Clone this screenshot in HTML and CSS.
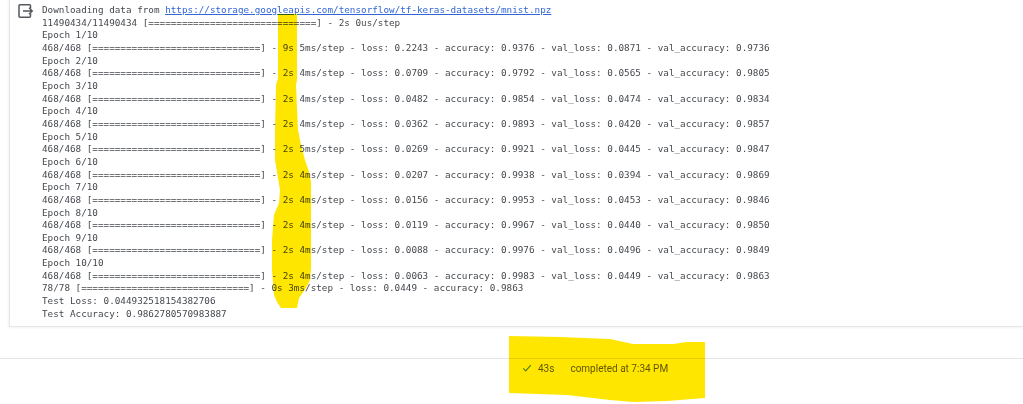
FILE: index.html
```html
<!DOCTYPE html>
<html lang="en">
<head>
<meta charset="utf-8">
<title>Output</title>
<link rel="stylesheet" href="styles.css">
</head>
<body>
<main class="page">
  <section class="cell">
    <svg class="out-icon" viewBox="0 0 16 16" width="16" height="16" aria-hidden="true">
      <path d="M12.5 5.5V2.8a1 1 0 0 0-1-1H2a1 1 0 0 0-1 1v10.4a1 1 0 0 0 1 1h9.5a1 1 0 0 0 1-1v-2.7" fill="none" stroke="#54585c" stroke-width="1.5"/>
      <path d="M5 8h9.5M11 4.8 14.2 8 11 11.2" fill="none" stroke="#54585c" stroke-width="1.5"/>
    </svg>
    <pre class="log">Downloading data from <a class="link" href="#">https://storage.googleapis.com/tensorflow/tf-keras-datasets/mnist.npz</a>
11490434/11490434 [==============================] - 2s 0us/step
Epoch 1/10
468/468 [==============================] - 9s 5ms/step - loss: 0.2243 - accuracy: 0.9376 - val_loss: 0.0871 - val_accuracy: 0.9736
Epoch 2/10
468/468 [==============================] - 2s 4ms/step - loss: 0.0709 - accuracy: 0.9792 - val_loss: 0.0565 - val_accuracy: 0.9805
Epoch 3/10
468/468 [==============================] - 2s 4ms/step - loss: 0.0482 - accuracy: 0.9854 - val_loss: 0.0474 - val_accuracy: 0.9834
Epoch 4/10
468/468 [==============================] - 2s 4ms/step - loss: 0.0362 - accuracy: 0.9893 - val_loss: 0.0420 - val_accuracy: 0.9857
Epoch 5/10
468/468 [==============================] - 2s 5ms/step - loss: 0.0269 - accuracy: 0.9921 - val_loss: 0.0445 - val_accuracy: 0.9847
Epoch 6/10
468/468 [==============================] - 2s 4ms/step - loss: 0.0207 - accuracy: 0.9938 - val_loss: 0.0394 - val_accuracy: 0.9869
Epoch 7/10
468/468 [==============================] - 2s 4ms/step - loss: 0.0156 - accuracy: 0.9953 - val_loss: 0.0453 - val_accuracy: 0.9846
Epoch 8/10
468/468 [==============================] - 2s 4ms/step - loss: 0.0119 - accuracy: 0.9967 - val_loss: 0.0440 - val_accuracy: 0.9850
Epoch 9/10
468/468 [==============================] - 2s 4ms/step - loss: 0.0088 - accuracy: 0.9976 - val_loss: 0.0496 - val_accuracy: 0.9849
Epoch 10/10
468/468 [==============================] - 2s 4ms/step - loss: 0.0063 - accuracy: 0.9983 - val_loss: 0.0449 - val_accuracy: 0.9863
78/78 [==============================] - 0s 3ms/step - loss: 0.0449 - accuracy: 0.9863
Test Loss: 0.044932518154382706
Test Accuracy: 0.9862780570983887</pre>
  </section>
  <footer class="status">
    <svg class="check" viewBox="0 0 12 12" width="10" height="10" aria-hidden="true">
      <path d="M1.5 6.5 4.5 9.5 10.5 2.5" fill="none" stroke="#4f8a10" stroke-width="1.3"/>
    </svg>
    <span class="duration">43s</span>
    <span class="completed">completed at 7:34 PM</span>
  </footer>
  <svg class="highlight" viewBox="0 0 1023 404" width="1023" height="404" aria-hidden="true">
    <path d="M278 14H297V80L296 85L298 130L301 145L305 160L309 172L311 182V268L310 280L306 288L299 298L297 308H281L277 302L274 295L272 270V240L274 215L279 203L280 190L278 178L275 160V130L276 85L278 78Z" fill="#ffe600"/>
    <path d="M509 336L560 337L610 339L633 344L673 344L687 342L705 342V398L667 401L633 402L610 400L567 395L509 393Z" fill="#ffe600"/>
  </svg>
</main>
</body>
</html>
```
FILE: styles.css
```css
html, body {
  margin: 0;
  padding: 0;
  background: #fff;
}
.page {
  position: relative;
  width: 1023px;
  height: 404px;
  overflow: hidden;
  filter: blur(0.3px);
}
.cell {
  display: flex;
  align-items: flex-start;
  gap: 8px;
  height: 327px;
  box-sizing: border-box;
  margin-left: 9px;
  padding: 3px 0 0 8px;
  border-left: 1px solid #e6e6e6;
  border-bottom: 1px solid #e6e6e6;
  box-shadow: -1px 1px 2px rgba(0, 0, 0, 0.05);
}
.out-icon {
  flex: none;
}
.log {
  margin: 1px 0 0;
  font: 9.315px/12.65px "DejaVu Sans Mono", monospace;
  color: #45494e;
  white-space: pre;
}
.link {
  color: #3367d6;
  text-decoration: underline;
}
.status {
  display: flex;
  align-items: center;
  height: 18px;
  margin-top: 31px;
  padding-left: 522px;
  border-top: 1px solid #e4e4e4;
  font: 10px "Roboto", sans-serif;
  color: #5f5f12;
}
.check {
  margin-right: 6px;
}
.duration {
  margin-right: 16px;
}
.highlight {
  position: absolute;
  top: 0;
  left: 0;
  mix-blend-mode: multiply;
}
```
